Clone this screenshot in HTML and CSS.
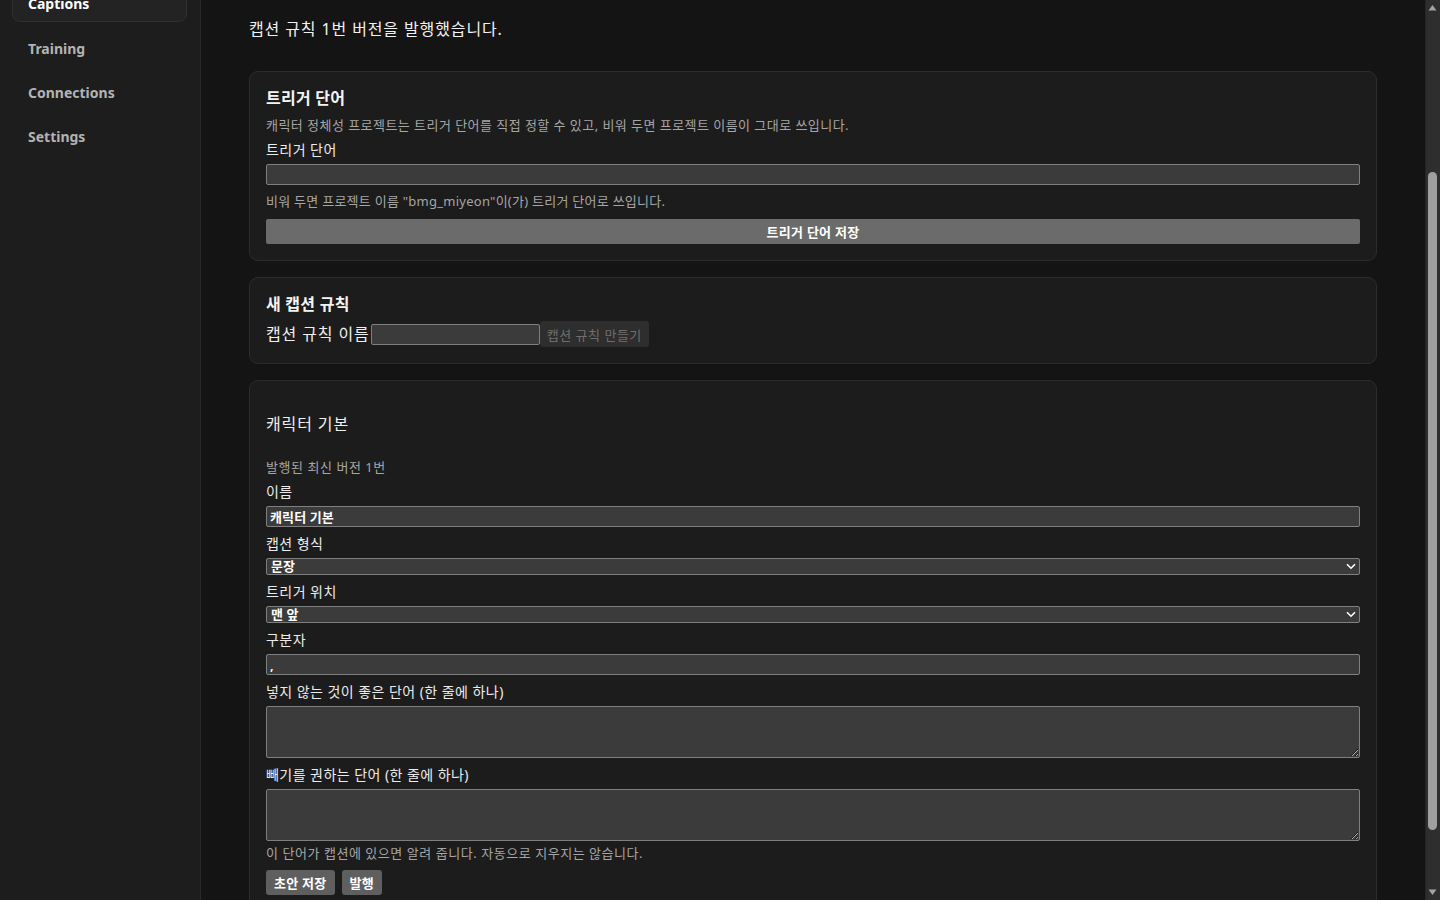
FILE: index.html
```html
<!DOCTYPE html>
<html lang="ko">
<head>
<meta charset="utf-8">
<title>Captions</title>
<link rel="stylesheet" href="styles.css">
</head>
<body>
<div class="app">
  <aside class="sidebar">
    <nav class="nav">
      <a class="nav-item active">Captions</a>
      <a class="nav-item">Training</a>
      <a class="nav-item">Connections</a>
      <a class="nav-item">Settings</a>
    </nav>
  </aside>

  <main class="main">
    <p class="notice">캡션 규칙 1번 버전을 발행했습니다.</p>

    <section class="card">
      <h2 class="card-title">트리거 단어</h2>
      <p class="muted desc">캐릭터 정체성 프로젝트는 트리거 단어를 직접 정할 수 있고, 비워 두면 프로젝트 이름이 그대로 쓰입니다.</p>
      <label class="label">트리거 단어</label>
      <input class="field" type="text">
      <p class="muted hint">비워 두면 프로젝트 이름 "bmg_miyeon"이(가) 트리거 단어로 쓰입니다.</p>
      <button class="btn btn-block">트리거 단어 저장</button>
    </section>

    <section class="card">
      <h2 class="card-title">새 캡션 규칙</h2>
      <div class="inline-row">
        <label class="inline-label">캡션 규칙 이름</label>
        <input class="field inline-field" type="text">
        <button class="btn btn-disabled" disabled>캡션 규칙 만들기</button>
      </div>
    </section>

    <section class="card">
      <h3 class="rule-title">캐릭터 기본</h3>
      <p class="muted version">발행된 최신 버전 1번</p>
      <label class="label">이름</label>
      <input class="field" type="text" value="캐릭터 기본">
      <label class="label">캡션 형식</label>
      <div class="select" role="combobox" tabindex="0">
        <span class="select-value">문장</span>
        <svg class="chevron" width="10" height="7" viewBox="0 0 10 7"><path d="M1 1.2 L5 5.2 L9 1.2" fill="none" stroke="#ffffff" stroke-width="1.6"/></svg>
      </div>
      <label class="label">트리거 위치</label>
      <div class="select" role="combobox" tabindex="0">
        <span class="select-value">맨 앞</span>
        <svg class="chevron" width="10" height="7" viewBox="0 0 10 7"><path d="M1 1.2 L5 5.2 L9 1.2" fill="none" stroke="#ffffff" stroke-width="1.6"/></svg>
      </div>
      <label class="label">구분자</label>
      <input class="field" type="text" value=",">
      <label class="label">넣지 않는 것이 좋은 단어 (한 줄에 하나)</label>
      <textarea class="area"></textarea>
      <label class="label">빼기를 권하는 단어 (한 줄에 하나)</label>
      <textarea class="area"></textarea>
      <p class="muted after-area">이 단어가 캡션에 있으면 알려 줍니다. 자동으로 지우지는 않습니다.</p>
      <div class="actions">
        <button class="btn btn-small">초안 저장</button>
        <button class="btn btn-small">발행</button>
      </div>
    </section>
  </main>

  <div class="scrollbar">
    <svg class="sb-arrow" width="15" height="15" viewBox="0 0 15 15"><path d="M3.5 10.5 L7.5 5 L11.5 10.5 Z" fill="#a3a3a3"/></svg>
    <div class="sb-track"><div class="sb-thumb"></div></div>
    <svg class="sb-arrow" width="15" height="15" viewBox="0 0 15 15"><path d="M3.5 4.5 L7.5 10 L11.5 4.5 Z" fill="#a3a3a3"/></svg>
  </div>
</div>
</body>
</html>
```

FILE: styles.css
```css
:root {
  color-scheme: dark;
}

* {
  box-sizing: border-box;
}

html, body {
  margin: 0;
  height: 100%;
  overflow: hidden;
}

body {
  background: #141414;
  color: #ececec;
  font-family: "Noto Sans", "Noto Sans CJK KR", sans-serif;
}

.app {
  display: flex;
  height: 900px;
}

/* Sidebar */
.sidebar {
  width: 201px;
  flex: 0 0 201px;
  background: #1d1d1d;
  border-right: 1px solid #2a2a2a;
  padding: 0 13px 0 12px;
}

.nav {
  display: flex;
  flex-direction: column;
  gap: 8px;
  margin-top: -16px;
}

.nav-item {
  display: flex;
  align-items: center;
  height: 36px;
  padding-left: 15px;
  border: 1px solid transparent;
  border-radius: 8px;
  font-size: 14px;
  font-weight: 700;
  color: #b3b3b3;
  text-decoration: none;
}

.nav-item.active {
  height: 38px;
  background: #232323;
  border-color: #2f2f2f;
  color: #ffffff;
}

/* Main */
.main {
  flex: 1 1 auto;
  min-width: 0;
  padding: 0 48px;
  overflow: hidden;
}

.notice {
  margin: 19px 0 32px;
  font-size: 16px;
  line-height: 20px;
  letter-spacing: 0.055em;
  color: #f2f2f2;
}

.card {
  display: flex;
  flex-direction: column;
  align-items: stretch;
  background: #1c1c1c;
  border: 1px solid #2c2c2c;
  border-radius: 9px;
  padding: 16px;
  margin-bottom: 16px;
}

.card-title {
  margin: 0;
  font-size: 16px;
  line-height: 20px;
  font-weight: 700;
  letter-spacing: 0.015em;
  color: #f4f4f4;
}

.rule-title {
  margin: 17px 0 0;
  font-size: 16px;
  line-height: 20px;
  font-weight: 400;
  letter-spacing: 0.055em;
  color: #f0f0f0;
}

.muted {
  margin: 0;
  font-size: 13px;
  line-height: 18px;
  letter-spacing: 0.042em;
  color: #a6a6a6;
}

.desc { margin-top: 8px; letter-spacing: 0.035em; }
.hint { margin-top: 7px; letter-spacing: 0.02em; }
.version { margin-top: 24px; }
.after-area { margin-top: 3px; }

.label {
  display: block;
  margin-top: 7px;
  font-size: 14px;
  line-height: 18px;
  letter-spacing: 0.032em;
  color: #ececec;
}

.field,
.select,
.area {
  width: 100%;
  margin: 5px 0 0;
  background: #3b3b3b;
  border: 1px solid #7f7f7f;
  border-radius: 2px;
  color: #ffffff;
  font-family: "Noto Sans", "Noto Sans CJK KR", sans-serif;
  font-size: 13px;
  font-weight: 600;
  letter-spacing: 0.01em;
}

.field {
  height: 21px;
  padding: 0 3px;
  line-height: 19px;
}

.select {
  display: flex;
  align-items: center;
  justify-content: space-between;
  height: 17px;
  padding: 0 3px 0 4px;
  line-height: 15px;
  cursor: default;
}

.select-value {
  display: block;
  white-space: nowrap;
}

.chevron {
  display: block;
  flex: 0 0 auto;
}

.area {
  height: 52px;
  padding: 2px 3px;
  resize: vertical;
}

.field + .label,
.select + .label,
.area + .label {
  margin-top: 8px;
}

.btn {
  font-family: "Noto Sans", "Noto Sans CJK KR", sans-serif;
  font-size: 13px;
  font-weight: 700;
  letter-spacing: 0.02em;
  white-space: nowrap;
  color: #ffffff;
  background: #6b6b6b;
  border: none;
  border-radius: 2px;
  padding: 0 7px;
  cursor: pointer;
}

.btn-block {
  width: 100%;
  height: 25px;
  margin-top: 9px;
}

.inline-row {
  display: flex;
  align-items: center;
  margin-top: 7px;
  height: 26px;
}

.inline-label {
  font-size: 16px;
  line-height: 20px;
  letter-spacing: 0.055em;
  color: #f0f0f0;
  margin-right: 1px;
}

.inline-field {
  width: 169px;
  margin: 0;
}

.btn-disabled {
  height: 26px;
  padding: 0 7px;
  background: #2e2e2e;
  color: #6e6e6e;
  font-weight: 400;
  letter-spacing: 0.04em;
  border-radius: 3px;
  cursor: default;
}

.actions {
  display: flex;
  gap: 7px;
  margin-top: 8px;
}

.btn-small {
  height: 25px;
  padding: 0 8px;
  background: #5f5f5f;
  border-radius: 3px;
}

/* Fake page scrollbar */
.scrollbar {
  flex: 0 0 15px;
  width: 15px;
  display: flex;
  flex-direction: column;
  background: #2e2e2e;
  border-left: 1px solid #262626;
}

.sb-arrow {
  display: block;
  flex: 0 0 15px;
  margin-left: -1px;
}

.sb-track {
  flex: 1 1 auto;
  padding-top: 157px;
}

.sb-thumb {
  width: 9px;
  height: 658px;
  margin-left: 2px;
  background: #9f9f9f;
  border-radius: 5px;
}
```
